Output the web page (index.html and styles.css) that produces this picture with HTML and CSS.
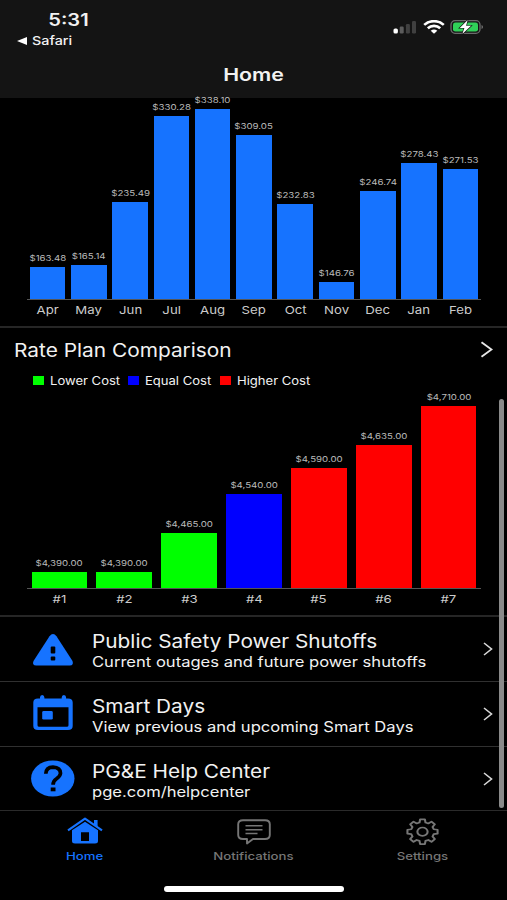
FILE: index.html
```
<!DOCTYPE html>
<html lang="en">
<head>
    <meta charset="UTF-8">
    <meta name="viewport" content="width=device-width, initial-scale=1.0">
    <title>Home</title>
    <link rel="stylesheet" href="styles.css">
</head>
<body>
    <div class="phone">
        <header class="header">
            <div class="status-bar">
                <div class="status-left">
                    <span class="time">5:31</span>
                    <div class="back-app">
                        <svg width="10" height="8" viewBox="0 0 10 8"><path d="M0 4 10 0v8z" fill="#fff"/></svg>
                        <span class="back-label">Safari</span>
                    </div>
                </div>
                <div class="status-right">
                    <svg class="signal" width="24" height="14" viewBox="0 0 24 14">
                        <rect x="0.5" y="8.5" width="4.4" height="5" rx="1.6" fill="#fff"/>
                        <rect x="6.7" y="6.5" width="4" height="7" rx="1.2" fill="#5c5c5c"/>
                        <rect x="12.9" y="4" width="4" height="9.5" rx="1.2" fill="#404040"/>
                        <rect x="19" y="1" width="4" height="12.5" rx="1.2" fill="#404040"/>
                    </svg>
                    <svg class="wifi" width="22" height="14" viewBox="0 0 22 14">
                        <g fill="none" stroke="#fff" stroke-width="2.6">
                            <path d="M1.2 4.9C6.6-.1 15.4-.1 20.8 4.9"/>
                            <path d="M4.8 8.3C8.3 5 13.7 5 17.2 8.3"/>
                        </g>
                        <path d="M7.7 10.8Q11 8.2 14.3 10.8L11 13.8z" fill="#fff"/>
                    </svg>
                    <svg class="battery" width="34" height="16" viewBox="0 0 34 16">
                        <rect x="1" y="1.7" width="29" height="12.6" rx="4" fill="none" stroke="#6b6b6b" stroke-width="1.3"/>
                        <rect x="3" y="3.4" width="25" height="9.2" rx="2.4" fill="#30d158"/>
                        <path d="M31.5 6v4q1.6-.6 1.6-2t-1.6-2z" fill="#6b6b6b"/>
                        <path d="M17.7 1 9.7 8.9h4.7L12.3 15l8.8-8.2h-5z" fill="#fff" stroke="#151515" stroke-width="1.3" paint-order="stroke"/>
                    </svg>
                </div>
            </div>
            <h1 class="title">Home</h1>
        </header>

        <main class="content">
            <section class="usage">
                <div class="chart chart-usage">
                    <div class="column"><span class="value">$163.48</span><div class="bar" style="height: 32px"></div></div>
                    <div class="column"><span class="value">$165.14</span><div class="bar" style="height: 33.5px"></div></div>
                    <div class="column"><span class="value">$235.49</span><div class="bar" style="height: 96.9px"></div></div>
                    <div class="column"><span class="value">$330.28</span><div class="bar" style="height: 182.4px"></div></div>
                    <div class="column"><span class="value">$338.10</span><div class="bar" style="height: 189.4px"></div></div>
                    <div class="column"><span class="value">$309.05</span><div class="bar" style="height: 163.2px"></div></div>
                    <div class="column"><span class="value">$232.83</span><div class="bar" style="height: 94.5px"></div></div>
                    <div class="column"><span class="value">$146.76</span><div class="bar" style="height: 16.9px"></div></div>
                    <div class="column"><span class="value">$246.74</span><div class="bar" style="height: 107.1px"></div></div>
                    <div class="column"><span class="value">$278.43</span><div class="bar" style="height: 135.6px"></div></div>
                    <div class="column"><span class="value">$271.53</span><div class="bar" style="height: 129.4px"></div></div>
                </div>
                <div class="axis">
                    <span>Apr</span><span>May</span><span>Jun</span><span>Jul</span><span>Aug</span><span>Sep</span><span>Oct</span><span>Nov</span><span>Dec</span><span>Jan</span><span>Feb</span>
                </div>
            </section>

            <section class="rates">
                <div class="rates-header">
                    <h2 class="rates-title">Rate Plan Comparison</h2>
                    <svg width="13" height="17" viewBox="0 0 13 17"><path d="M1.5 1.2 11.5 8.5 1.5 15.8" fill="none" stroke="#e6e6e6" stroke-width="1.9"/></svg>
                </div>
                <div class="legend">
                    <div class="legend-item lower"><i class="swatch"></i><span>Lower Cost</span></div>
                    <div class="legend-item equal"><i class="swatch"></i><span>Equal Cost</span></div>
                    <div class="legend-item higher"><i class="swatch"></i><span>Higher Cost</span></div>
                </div>
                <div class="chart chart-rates">
                    <div class="column lower"><span class="value">$4,390.00</span><div class="bar" style="height: 16.5px"></div></div>
                    <div class="column lower"><span class="value">$4,390.00</span><div class="bar" style="height: 16.5px"></div></div>
                    <div class="column lower"><span class="value">$4,465.00</span><div class="bar" style="height: 55.2px"></div></div>
                    <div class="column equal"><span class="value">$4,540.00</span><div class="bar" style="height: 94px"></div></div>
                    <div class="column higher"><span class="value">$4,590.00</span><div class="bar" style="height: 119.8px"></div></div>
                    <div class="column higher"><span class="value">$4,635.00</span><div class="bar" style="height: 143px"></div></div>
                    <div class="column higher"><span class="value">$4,710.00</span><div class="bar" style="height: 181.8px"></div></div>
                </div>
                <div class="axis">
                    <span>#1</span><span>#2</span><span>#3</span><span>#4</span><span>#5</span><span>#6</span><span>#7</span>
                </div>
            </section>

            <nav class="links">
                <a class="link">
                    <svg class="link-icon" viewBox="0 0 44 38">
                        <path d="M18.5 6.2Q22 1.6 25.5 6.2L41.5 31Q43 35.3 38.8 35.5H5.200Q.8 35.3 2.500 31z" fill="#1673ff"/>
                        <rect x="19.7" y="16.5" width="4.6" height="7" rx="1" fill="#000"/>
                        <rect x="19.7" y="26.6" width="4.6" height="4" rx="1" fill="#000"/>
                    </svg>
                    <div class="link-text">
                        <span class="link-title">Public Safety Power Shutoffs</span>
                        <span class="link-sub">Current outages and future power shutoffs</span>
                    </div>
                    <svg class="chevron" viewBox="0 0 10 14"><path d="M1 1 8.5 7 1 13" fill="none" stroke="#d8d8d8" stroke-width="1.6"/></svg>
                </a>
                <a class="link">
                    <svg class="link-icon" viewBox="0 0 44 38">
                        <path fill-rule="evenodd" d="M9 2.500q0-2.500 2.200-2.500t2.200 2.500V3.500h17.300V2.500q0-2.500 2.200-2.500t2.200 2.500V3.500H37q4.700 0 4.700 4V31q0 4-4.700 4H7q-4.700 0-4.700-4V7.500q0-4 4.700-4h2zM6.500 12.200V30.200q0 1.600 1.700 1.600H35.800q1.700 0 1.700-1.600V12.200z" fill="#1673ff"/>
                        <rect x="11.2" y="16" width="10.600" height="8.6" rx="1.4" fill="#1673ff"/>
                    </svg>
                    <div class="link-text">
                        <span class="link-title">Smart Days</span>
                        <span class="link-sub">View previous and upcoming Smart Days</span>
                    </div>
                    <svg class="chevron" viewBox="0 0 10 14"><path d="M1 1 8.5 7 1 13" fill="none" stroke="#d8d8d8" stroke-width="1.6"/></svg>
                </a>
                <a class="link">
                    <svg class="link-icon" viewBox="0 0 44 38">
                        <ellipse cx="21.8" cy="18.5" rx="21.7" ry="18" fill="#1673ff"/>
                        <path d="M14.8 13.8Q15 7.3 22 7.1 29.4 7.4 29.5 13.3 29.4 16.1 25.5 18.8 22.1 20.9 22.1 24.8" fill="none" stroke="#000" stroke-width="3.7"/>
                        <rect x="19.7" y="27.5" width="4.8" height="3.8" fill="#000"/>
                    </svg>
                    <div class="link-text">
                        <span class="link-title">PG&amp;E Help Center</span>
                        <span class="link-sub">pge.com/helpcenter</span>
                    </div>
                    <svg class="chevron" viewBox="0 0 10 14"><path d="M1 1 8.5 7 1 13" fill="none" stroke="#d8d8d8" stroke-width="1.6"/></svg>
                </a>
            </nav>
            <div class="scrollbar"></div>
        </main>

        <footer class="tab-bar">
            <div class="tabs">
                <a class="tab active">
                    <svg width="36" height="28" viewBox="0 0 36 28">
                        <path d="M1 13.3 18 1.7 35 13.3" fill="none" stroke="#1673ff" stroke-width="2.2" stroke-linejoin="round"/>
                        <path d="M27 3h3.6v7.5L27 8z" fill="#1673ff"/>
                        <path fill-rule="evenodd" d="M5 13.3 18 4.8l13 8.5V24q0 2.5-3 2.5H8q-3 0-3-2.5zM14 15.3V24h8V15.3z" fill="#1673ff"/>
                    </svg>
                    <span>Home</span>
                </a>
                <a class="tab">
                    <svg width="36" height="28" viewBox="0 0 36 28">
                        <g fill="none" stroke="#767676" stroke-linejoin="round">
                            <path d="M7 3.3H29q4.8 0 4.8 4V18q0 4-4.8 4H17L11 26.5V22H7q-4.8 0-4.8-4V7.3q0-4 4.8-4z" stroke-width="1.9"/>
                            <path d="M9.5 8.8H26.5M9.5 12.7H26.5M9.5 16.6H21.5" stroke-width="1.5"/>
                        </g>
                    </svg>
                    <span>Notifications</span>
                </a>
                <a class="tab">
                    <svg width="36" height="28" viewBox="0 0 36 28">
                        <g transform="translate(17.5 14.7) scale(1.22 1)" fill="none" stroke="#767676" stroke-width="1.7" stroke-linejoin="round">
                            <path d="M-1.95-12.35H1.95L2.46-9.2 4.77-8.24 7.35-10.1 10.1-7.35 8.24-4.77 9.2-2.46 12.35-1.95V1.95L9.2 2.46 8.24 4.77 10.1 7.35 7.35 10.1 4.77 8.24 2.46 9.2 1.95 12.35H-1.95L-2.46 9.2-4.77 8.24-7.35 10.1-10.1 7.35-8.24 4.77-9.2 2.46-12.35 1.95V-1.95L-9.2-2.46-8.24-4.77-10.1-7.35-7.35-10.1-4.77-8.24-2.46-9.2z"/>
                            <circle r="4.2"/>
                        </g>
                    </svg>
                    <span>Settings</span>
                </a>
            </div>
            <div class="home-indicator"></div>
        </footer>
    </div>
</body>
</html>
```
FILE: styles.css
```
* {
    box-sizing: border-box;
}

body {
    margin: 0;
    background: #000;
    color: #f2f2f2;
    font-family: Inter, "Liberation Sans", sans-serif;
}

svg {
    display: block;
    flex-shrink: 0;
}

.phone {
    display: flex;
    flex-direction: column;
    width: 507px;
    height: 900px;
    overflow: hidden;
}

/* wide lettering: every label is stretched sideways */
.time,
.back-label,
.title,
.value,
.axis span,
.rates-title,
.legend span,
.link-title,
.link-sub,
.tab span {
    display: block;
    white-space: nowrap;
    transform: scaleX(1.2);
}

.back-label,
.rates-title,
.legend span,
.link-title,
.link-sub {
    transform-origin: left center;
}

.header {
    height: 98px;
    flex-shrink: 0;
    background: #141414;
}

.status-bar {
    display: flex;
    justify-content: space-between;
    height: 62px;
    padding: 10px 23px 0 17px;
}

.status-left {
    display: flex;
    flex-direction: column;
    width: 103px;
}

.time {
    font-size: 16.8px;
    line-height: 20px;
    font-weight: 600;
    text-align: center;
}

.back-app {
    display: flex;
    align-items: center;
    gap: 5px;
    height: 21px;
}

.back-label {
    font-size: 12.2px;
    font-weight: 500;
    transform: scaleX(1.18);
}

.status-right {
    display: flex;
    align-items: center;
    gap: 5px;
    height: 34px;
}

.signal {
    margin-right: 1px;
}

.title {
    margin: 0;
    font-size: 17.8px;
    line-height: 25px;
    font-weight: 600;
    text-align: center;
}

.content {
    position: relative;
    height: 713px;
    flex-shrink: 0;
}

.usage {
    height: 230px;
    border-bottom: 2px solid #262626;
}

.chart {
    display: flex;
    margin: 0 26px 0 27px;
    border-bottom: 1px solid #555;
}

.chart-usage {
    height: 201.5px;
}

.chart-rates {
    height: 200px;
}

.column {
    flex: 1 1 0;
    min-width: 0;
    display: flex;
    flex-direction: column;
    align-items: center;
    justify-content: flex-end;
}

.value {
    font-size: 7.8px;
    line-height: 10px;
    margin-bottom: 4px;
    color: #bbb;
    transform: scaleX(1.24);
}

.bar {
    width: 35.5px;
    flex-shrink: 0;
    background: #1673ff;
}

.chart-rates .bar {
    width: 55.6px;
}

.lower .bar,
.lower .swatch {
    background: #0f0;
}

.equal .bar,
.equal .swatch {
    background: #00f;
}

.higher .bar,
.higher .swatch {
    background: #f00;
}

.axis {
    display: flex;
    margin: 0 26px 0 27px;
    padding-top: 2px;
}

.axis span {
    flex: 1 1 0;
    min-width: 0;
    text-align: center;
    font-size: 11px;
    line-height: 16px;
    color: #ccc;
}

.rates {
    height: 289px;
    border-bottom: 2px solid #262626;
}

.rates-header {
    display: flex;
    align-items: center;
    justify-content: space-between;
    height: 43px;
    padding: 0 14px;
}

.rates-title {
    margin: 0;
    font-size: 18.5px;
    font-weight: 400;
    transform: scaleX(1.127);
}

.legend {
    display: flex;
    height: 18px;
    padding-left: 33px;
}

.legend-item {
    display: flex;
    align-items: center;
    gap: 6px;
    width: 95px;
    font-size: 11.3px;
    line-height: 20px;
}

.legend-item.equal {
    width: 92px;
}

.legend span {
    padding-top: 1px;
    transform: scaleX(1.155);
}

.swatch {
    width: 11px;
    height: 9px;
}

.link {
    display: flex;
    align-items: center;
    height: 65px;
    padding: 0 14px 0 31px;
    border-bottom: 1px solid #303030;
}

.link:last-child {
    height: 64px;
    border-bottom: none;
}

.link-icon {
    width: 44px;
    height: 38px;
    margin-right: 17px;
}

.link-text {
    flex: 1;
    padding-top: 3px;
}

.link-title {
    font-size: 18.5px;
    line-height: 22px;
    transform: scaleX(1.125);
}

.link-sub {
    font-size: 14.2px;
    line-height: 19px;
    transform: scaleX(1.168);
}

.chevron {
    width: 10px;
    height: 14px;
}

.scrollbar {
    position: absolute;
    top: 301px;
    right: 3px;
    width: 5px;
    height: 409px;
    border-radius: 3px;
    background: #8a8a8a;
}

.tab-bar {
    flex: 1;
    display: flex;
    flex-direction: column;
    align-items: center;
    border-top: 1px solid #2a2a2a;
    margin-top: -1px;
}

.tabs {
    display: flex;
    width: 100%;
    height: 75px;
    padding-top: 6px;
}

.tab {
    flex: 1;
    display: flex;
    flex-direction: column;
    align-items: center;
    color: #767676;
    font-size: 11px;
    font-weight: 500;
    line-height: 18px;
}

.tab span {
    margin-top: 2px;
}

.tab.active {
    color: #1673ff;
}

.home-indicator {
    width: 180px;
    height: 6px;
    border-radius: 3px;
    background: #fff;
}
```
